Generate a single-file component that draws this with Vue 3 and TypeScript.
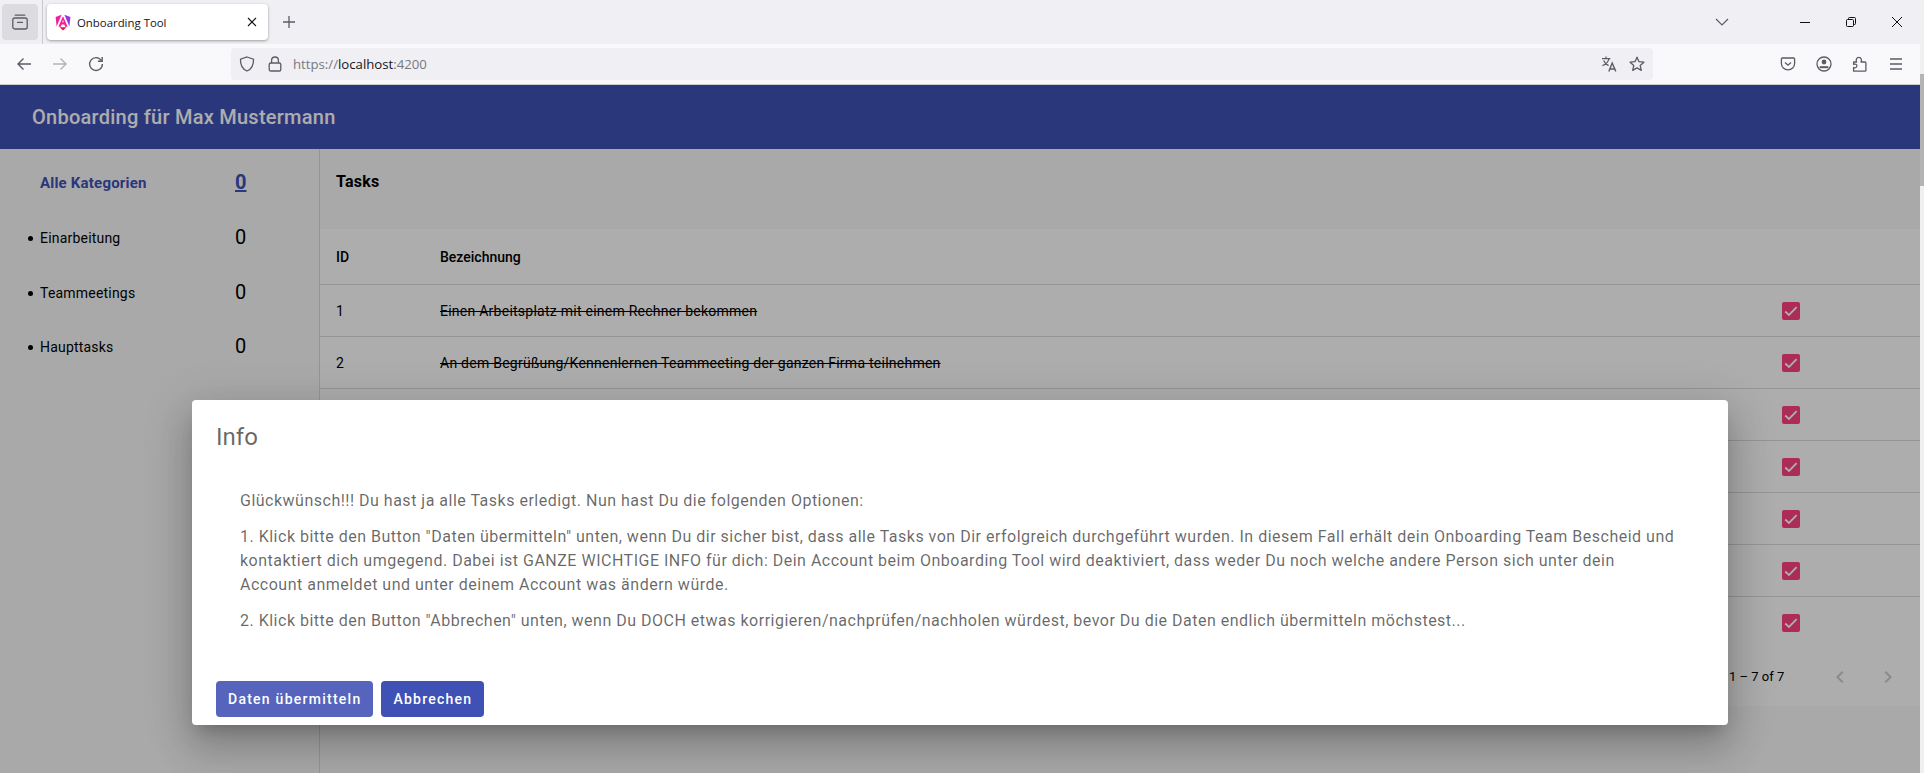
<script setup lang="ts">
interface Category {
  name: string
  count: number
}

interface Task {
  id: number
  name: string
}

const categories: Category[] = [
  { name: 'Einarbeitung', count: 0 },
  { name: 'Teammeetings', count: 0 },
  { name: 'Haupttasks', count: 0 },
]

// rows 3-7 sit completely behind the dialog
const tasks: Task[] = [
  { id: 1, name: 'Einen Arbeitsplatz mit einem Rechner bekommen' },
  { id: 2, name: 'An dem Begrüßung/Kennenlernen Teammeeting der ganzen Firma teilnehmen' },
  { id: 3, name: '' },
  { id: 4, name: '' },
  { id: 5, name: '' },
  { id: 6, name: '' },
  { id: 7, name: '' },
]
</script>

<template>
  <div class="window">
    <div class="main">
      <div class="tabstrip">
        <div class="side-btn">
          <svg width="16" height="16" viewBox="0 0 16 16" fill="none" stroke="#5b5b66" stroke-width="1.3">
            <path d="M3.2 1.2h9.6" stroke-linecap="round" />
            <rect x="0.8" y="4" width="14.4" height="11" rx="2" />
            <path d="M5.6 8.4h4.8" stroke-linecap="round" />
          </svg>
        </div>
        <div class="sep"></div>
        <div class="tab">
          <svg class="favicon" width="16" height="17" viewBox="0 0 16 17">
            <path d="M6.6 0.8 0.6 3 1.6 12.6Z" fill="#f01ea0" />
            <path d="M9.4 0.8 15.400 3 14.400 12.600Z" fill="#9a34e0" />
            <path d="M8 2.200 3.400 12.800h2.400l.9-2.300h2.600l.9 2.300h2.400Z" fill="#f0208c" />
            <path d="M8 5.800 7.200 8.300h1.600Z" fill="#fff" />
            <path d="M4.600 13.300h6.800L8 16.500Z" fill="#e8124f" />
          </svg>
          <span class="tab-title">Onboarding Tool</span>
          <svg class="tab-close" width="10" height="10" viewBox="0 0 10 10" stroke="#15141a" stroke-width="1.1">
            <path d="M1 1l8 8M9 1l-8 8" />
          </svg>
        </div>
        <svg class="plus" width="14" height="14" viewBox="0 0 14 14" stroke="#5b5b66" stroke-width="1.3">
          <path d="M7 1v12M1 7h12" />
        </svg>
        <div class="spacer"></div>
        <svg class="list-tabs" width="14" height="8" viewBox="0 0 14 8" fill="none" stroke="#5b5b66" stroke-width="1.2">
          <path d="M1 1l6 6 6-6" />
        </svg>
        <div class="caption">
          <div class="cap-btn">
            <svg width="10" height="10" viewBox="0 0 10 10" stroke="#111" stroke-width="1"><path d="M0 5.5h10" /></svg>
          </div>
          <div class="cap-btn">
            <svg width="10" height="10" viewBox="0 0 10 10" fill="none" stroke="#111" stroke-width="1">
              <rect x="0.5" y="2.5" width="7" height="7" rx="1" />
              <path d="M2.5 2.5V1.5a1 1 0 0 1 1-1h5a1 1 0 0 1 1 1v5a1 1 0 0 1-1 1h-1" />
            </svg>
          </div>
          <div class="cap-btn">
            <svg width="10" height="10" viewBox="0 0 10 10" stroke="#111" stroke-width="1"><path d="M0 0l10 10M10 0L0 10" /></svg>
          </div>
        </div>
      </div>

      <div class="toolbar">
        <div class="tool">
          <svg width="16" height="16" viewBox="0 0 16 16" fill="none" stroke="#5b5b66" stroke-width="1.4">
            <path d="M15 8H2M7.5 2.5 2 8l5.5 5.5" />
          </svg>
        </div>
        <div class="tool">
          <svg width="16" height="16" viewBox="0 0 16 16" fill="none" stroke="#b3b3b9" stroke-width="1.4">
            <path d="M1 8h13M8.5 2.5 14 8l-5.5 5.5" />
          </svg>
        </div>
        <div class="tool">
          <svg width="16" height="16" viewBox="0 0 16 16" fill="none" stroke="#5b5b66" stroke-width="1.4">
            <path d="M13.4 4.6A6.4 6.4 0 1 0 14.4 8" />
            <path d="M14.2 1v4.3H9.9" />
          </svg>
        </div>
        <div class="urlbar">
          <svg width="16" height="16" viewBox="0 0 16 16" fill="none" stroke="#5b5b66" stroke-width="1.3">
            <path d="M8 1 14.5 3.2C14.8 9 12.5 13 8 15 3.5 13 1.2 9 1.5 3.2Z" />
          </svg>
          <svg class="lock" width="14" height="16" viewBox="0 0 14 16" fill="none" stroke="#5b5b66" stroke-width="1.3">
            <path d="M3.6 7V4.4a3.4 3.4 0 0 1 6.8 0V7" />
            <rect x="1.2" y="7" width="11.6" height="8" rx="1.6" />
          </svg>
          <span class="url"><span class="dim">https://</span>localhost<span class="dim">:4200</span></span>
          <div class="spacer"></div>
          <svg width="16" height="16" viewBox="0 0 16 16" fill="none" stroke="#5b5b66" stroke-width="1.2">
            <path d="M1 2.6h8.4M5 .6v2M8 2.6C7.2 6 4.6 8.4 1.4 9.6M2.6 4.4c1 2.4 3 4.2 5 5.2" />
            <path d="M7.8 15.4 11.2 7l3.6 8.4M9 13h4.6" stroke-width="1.4" />
          </svg>
          <svg class="star" width="16" height="16" viewBox="0 0 16 16" fill="none" stroke="#5b5b66" stroke-width="1.3">
            <path d="M8 1.2 10 5.7l4.9.5-3.7 3.3 1.1 4.9L8 11.9l-4.3 2.5 1.1-4.9L1.1 6.2 6 5.7Z" stroke-linejoin="round" />
          </svg>
        </div>
        <div class="spacer"></div>
        <div class="tool">
          <svg width="16" height="16" viewBox="0 0 16 16" fill="none" stroke="#5b5b66" stroke-width="1.3">
            <path d="M2.4 2h11.2c.6 0 1 .4 1 1v4.4c0 3.6-3 6.4-6.6 6.4S1.4 11 1.4 7.4V3c0-.6.4-1 1-1Z" />
            <path d="M5 6.4 8 9.2l3-2.8" />
          </svg>
        </div>
        <div class="tool">
          <svg width="16" height="16" viewBox="0 0 16 16" fill="none" stroke="#5b5b66" stroke-width="1.3">
            <circle cx="8" cy="8" r="7" />
            <circle cx="8" cy="6" r="2.4" fill="#5b5b66" stroke="none" />
            <path d="M3.6 11.2h8.8" stroke-width="2" />
          </svg>
        </div>
        <div class="tool">
          <svg width="16" height="16" viewBox="0 0 16 16" fill="none" stroke="#5b5b66" stroke-width="1.3">
            <path d="M1.6 6h3c-.9-1.7-.2-4.6 2.2-4.6S10 4.300 9 6h4c.5 0 .9.4.9.9v7.500c0 .4-.4.8-.9.800H1.600v-3.700c1.700.8 3.300-.2 3.300-1.700S3.300 7.600 1.600 8.400Z" stroke-linejoin="round" />
          </svg>
        </div>
        <div class="tool">
          <svg width="16" height="16" viewBox="0 0 16 16" stroke="#5b5b66" stroke-width="1.3">
            <path d="M2 3h12M2 8h12M2 13h12" />
          </svg>
        </div>
      </div>

      <div class="page">
        <header class="app-header">Onboarding für Max Mustermann</header>
        <div class="content">
          <aside class="sidebar">
            <div class="cat-row cat-all">
              <span>Alle Kategorien</span>
              <span class="cat-count">0</span>
            </div>
            <div v-for="c in categories" :key="c.name" class="cat-row">
              <span class="cat-name">{{ c.name }}</span>
              <span class="cat-count">{{ c.count }}</span>
            </div>
          </aside>
          <section class="tasks">
            <h2 class="tasks-title">Tasks</h2>
            <div class="table">
              <div class="tr th">
                <div class="col-id">ID</div>
                <div class="col-name">Bezeichnung</div>
              </div>
              <div v-for="t in tasks" :key="t.id" class="tr">
                <div class="col-id">{{ t.id }}</div>
                <div class="col-name done">{{ t.name }}</div>
                <div class="col-check">
                  <svg width="18" height="18" viewBox="0 0 18 18">
                    <rect width="18" height="18" rx="2" fill="#ff4081" />
                    <path d="M3.200 9.500 7 13l7.600-7.800" fill="none" stroke="#fff" stroke-width="1.800" />
                  </svg>
                </div>
              </div>
              <div class="paginator">
                <span class="range">1 – 7 of 7</span>
                <svg class="prev" width="24" height="24" viewBox="0 0 24 24" fill="rgba(0,0,0,.2)">
                  <path d="M15.410 7.410 14 6l-6 6 6 6 1.410-1.410L10.830 12z" />
                </svg>
                <svg class="next" width="24" height="24" viewBox="0 0 24 24" fill="rgba(0,0,0,.2)">
                  <path d="M10 6 8.590 7.410 13.170 12l-4.580 4.590L10 18l6-6z" />
                </svg>
              </div>
            </div>
          </section>
        </div>

        <div class="overlay">
          <div class="dialog">
            <h1 class="dialog-title">Info</h1>
            <div class="dialog-body">
              <p>Glückwünsch!!! Du hast ja alle Tasks erledigt. Nun hast Du die folgenden Optionen:</p>
              <p>1. Klick bitte den Button "Daten übermitteln" unten, wenn Du dir sicher bist, dass alle Tasks von Dir erfolgreich durchgeführt wurden. In diesem Fall erhält dein Onboarding Team Bescheid und kontaktiert dich umgegend. Dabei ist GANZE WICHTIGE INFO für dich: Dein Account beim Onboarding Tool wird deaktiviert, dass weder Du noch welche andere Person sich unter dein Account anmeldet und unter deinem Account was ändern würde.</p>
              <p>2. Klick bitte den Button "Abbrechen" unten, wenn Du DOCH etwas korrigieren/nachprüfen/nachholen würdest, bevor Du die Daten endlich übermitteln möchstest...</p>
            </div>
            <div class="dialog-actions">
              <button class="btn btn-focus">Daten übermitteln</button>
              <button class="btn">Abbrechen</button>
            </div>
          </div>
        </div>
      </div>
    </div>
    <div class="scrollbar"><div class="thumb"></div></div>
  </div>
</template>

<style>
html, body { margin: 0; overflow: hidden; }
</style>

<style scoped>
.window { display: flex; width: 1924px; height: 773px; overflow: hidden; font-family: Roboto, "Helvetica Neue", sans-serif; }
.main { width: 1920px; display: flex; flex-direction: column; }
.scrollbar { width: 4px; background: #f0f0f0; padding-top: 74px; box-sizing: border-box; }
.thumb { height: 112px; background: #b4b4b4; }
.spacer { flex: 1; }

.tabstrip { height: 44px; flex: none; background: #f0f0f4; display: flex; align-items: center; padding-left: 2px; box-sizing: border-box; }
.side-btn { width: 36px; height: 36px; border-radius: 4px; background: #dcdce0; display: flex; align-items: center; justify-content: center; }
.sep { width: 1px; height: 44px; background: #c9c9ce; margin-left: 4px; }
.tab { width: 221px; height: 36px; margin-left: 4px; background: #fff; border-radius: 4px; box-shadow: 0 1px 3px rgba(0,0,0,.35); display: flex; align-items: center; padding: 0 11px 0 8px; box-sizing: border-box; }
.favicon { flex: none; }
.tab-title { flex: 1; margin-left: 6px; font: 11.4px "Open Sans", sans-serif; color: #15141a; }
.plus { margin-left: 14px; }
.list-tabs { margin-right: 53px; }
.caption { display: flex; }
.cap-btn { width: 46px; height: 44px; display: flex; align-items: center; justify-content: center; }

.toolbar { height: 41px; flex: none; background: #f9f9fb; border-bottom: 1px solid #ccc; display: flex; align-items: center; gap: 4px; padding: 0 8px; box-sizing: border-box; }
.tool { width: 32px; height: 32px; display: flex; align-items: center; justify-content: center; }
.urlbar { width: 1422px; height: 32px; margin-left: 115px; background: #f0f0f4; border-radius: 4px; display: flex; align-items: center; padding: 0 8px; box-sizing: border-box; }
.lock { margin-left: 13px; }
.url { margin-left: 11px; font: 13.2px "Open Sans", sans-serif; color: #15141a; }
.dim { color: #77777f; }
.star { margin-left: 12px; }

.page { position: relative; flex: 1; display: flex; flex-direction: column; background: #fafafa; }
.app-header { height: 64px; flex: none; background: #3f51b5; color: #fff; font-size: 20px; font-weight: 500; letter-spacing: .25px; line-height: 64px; padding-left: 32px; }
.content { flex: 1; display: flex; }
.sidebar { width: 319px; flex: none; border-right: 1px solid #dcdcdc; padding-top: 12px; }
.cat-row { height: 54.5px; display: flex; align-items: center; font-size: 14px; letter-spacing: .2px; color: #000; padding-left: 40px; position: relative; }
.cat-all { height: 44px; margin-bottom: 6px; color: #3f51b5; font-size: 15px; font-weight: 700; }
.cat-name { position: relative; }
.cat-name::before { content: ""; position: absolute; left: -12px; top: 6px; width: 5px; height: 5px; border-radius: 50%; background: #000; }
.cat-count { position: absolute; left: 235px; margin-top: -2px; font-size: 20px; font-weight: 400; letter-spacing: 0; }
.cat-all .cat-count { font-weight: 700; text-decoration: underline; }

.tasks { flex: 1; min-width: 0; }
.tasks-title { margin: 0; height: 80px; box-sizing: border-box; padding: 23px 0 0 16px; font-size: 16px; line-height: 20px; font-weight: 700; letter-spacing: .25px; color: #000; }
.table { background: #fff; }
.tr { height: 52px; box-sizing: border-box; border-bottom: 1px solid #dcdcdc; display: flex; align-items: center; font-size: 14px; color: #000; padding-left: 16px; }
.tr.th { height: 56px; font-weight: 500; }
.tr:nth-last-child(2) { border-bottom: none; }
.col-id { width: 104px; flex: none; }
.col-name { flex: 1; }
.done { text-decoration: line-through; letter-spacing: .25px; }
.col-check { width: 138px; flex: none; display: flex; }
.paginator { height: 57px; display: flex; align-items: center; font-size: 13px; color: #000; padding: 0 0 2px 1409px; box-sizing: border-box; }
.range { width: 99px; }
.next { margin-left: 24px; }

.overlay { position: absolute; inset: 0; background: rgba(0,0,0,.32); padding-top: 315px; display: flex; justify-content: center; align-items: flex-start; }
.dialog { width: 1536px; height: 325px; background: #fff; border-radius: 4px; display: flex; flex-direction: column; box-sizing: border-box; box-shadow: 0 11px 15px -7px rgba(0,0,0,.2), 0 24px 38px 3px rgba(0,0,0,.14), 0 9px 46px 8px rgba(0,0,0,.12); }
.dialog-title { margin: 0; padding: 21px 24px 0; font-size: 24px; line-height: 32px; font-weight: 400; color: rgba(0,0,0,.6); }
.dialog-body { flex: 1; padding: 36px 48px 0; font-size: 16px; line-height: 24px; letter-spacing: .5px; color: rgba(0,0,0,.6); }
.dialog-body p { margin: 0 0 12px; }
.dialog-actions { display: flex; gap: 8px; padding: 0 24px 8px; }
.btn { height: 36px; padding: 0 12px; border: none; border-radius: 4px; background: #3f51b5; color: #fff; font-family: Roboto, sans-serif; font-size: 14px; font-weight: 500; letter-spacing: 1.25px; }
.btn-focus { background: #5664bd; }
</style>
